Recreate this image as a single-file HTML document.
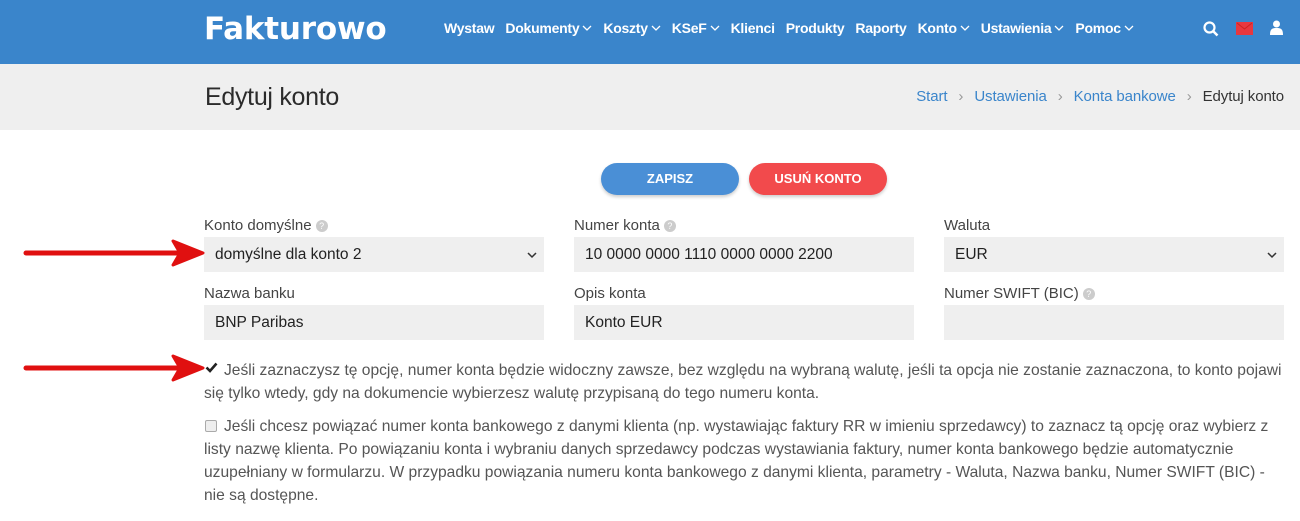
<!DOCTYPE html>
<html><head><meta charset="utf-8"><style>
*{box-sizing:border-box;margin:0;padding:0}
body{width:1300px;height:521px;overflow:hidden;background:#fff;font-family:"Liberation Sans",sans-serif;color:#333;position:relative}
.hdr{position:absolute;left:0;top:0;width:1300px;height:64px;background:#3a85cb}
.logo{position:absolute;left:204px;top:11px;color:#fff;font-size:31px;font-weight:bold;letter-spacing:-0.2px;font-family:"DejaVu Sans","Liberation Sans",sans-serif}
.nav{position:absolute;top:20px;left:444px;color:#fff;font-size:14px;font-weight:bold;white-space:nowrap;letter-spacing:-0.25px}
.nav span{margin-right:11px}
.nav svg{margin-left:3px;vertical-align:2px}
.band{position:absolute;left:0;top:64px;width:1300px;height:66px;background:#efefef}
h1{position:absolute;left:205px;top:83px;font-size:25px;font-weight:normal;color:#2b2b2b;letter-spacing:-0.3px}
.bc{position:absolute;right:16px;top:88px;font-size:15px;color:#3a85cb;letter-spacing:-0.1px}
.bc i{font-style:normal;color:#999;margin:0 11px}
.bc b{font-weight:normal;color:#333}
.btn{position:absolute;top:163px;height:32px;border-radius:16px;color:#fff;font-size:13px;font-weight:bold;text-align:center;line-height:32px;box-shadow:0 2px 3px rgba(0,0,0,.2)}
.lbl{position:absolute;font-size:15px;color:#444}
.q{display:inline-block;width:12px;height:12px;border-radius:50%;background:#ccc;color:#fff;font-size:9px;text-align:center;line-height:12px;vertical-align:1px;margin-left:4px}
.inp{position:absolute;width:340px;height:35px;background:#efefef;font-size:15.5px;color:#222;padding:9px 11px}
.chev{position:absolute;right:6px;top:8px}
.txt{position:absolute;left:224px;font-size:15.6px;color:#555;line-height:23px;width:1080px;white-space:nowrap}
.cb{position:absolute;width:12px;height:12px;border:1px solid #aaa;background:#eee;border-radius:2px}
</style></head><body>
<div class="hdr">
<div class="logo">Fakturowo</div>
<div class="nav"><span>Wystaw</span><span>Dokumenty<svg width="10" height="6"><path d="M1 1l4 4 4-4" stroke="#fff" stroke-width="1.3" fill="none"/></svg></span><span>Koszty<svg width="10" height="6"><path d="M1 1l4 4 4-4" stroke="#fff" stroke-width="1.3" fill="none"/></svg></span><span>KSeF<svg width="10" height="6"><path d="M1 1l4 4 4-4" stroke="#fff" stroke-width="1.3" fill="none"/></svg></span><span>Klienci</span><span>Produkty</span><span>Raporty</span><span>Konto<svg width="10" height="6"><path d="M1 1l4 4 4-4" stroke="#fff" stroke-width="1.3" fill="none"/></svg></span><span>Ustawienia<svg width="10" height="6"><path d="M1 1l4 4 4-4" stroke="#fff" stroke-width="1.3" fill="none"/></svg></span><span>Pomoc<svg width="10" height="6"><path d="M1 1l4 4 4-4" stroke="#fff" stroke-width="1.3" fill="none"/></svg></span></div>
<svg style="position:absolute;left:1203px;top:21px" width="16" height="16" viewBox="0 0 16 16"><circle cx="6.5" cy="6.5" r="5" fill="none" stroke="#fff" stroke-width="2.2"/><path d="M10 10l4.5 4.5" stroke="#fff" stroke-width="2.5"/></svg>
<svg style="position:absolute;left:1236px;top:22px" width="17" height="13"><rect width="17" height="13" fill="#e8373f"/><path d="M1 1l7.5 6 7.5-6" stroke="#c22" fill="none"/></svg>
<svg style="position:absolute;left:1270px;top:20px" width="13" height="15"><circle cx="6.5" cy="4" r="3.5" fill="#fff"/><path d="M0 15c0-6 2-7 6.5-7s6.5 1 6.5 7z" fill="#fff"/></svg>
</div>
<div class="band"></div>
<h1>Edytuj konto</h1>
<div class="bc">Start<i>›</i>Ustawienia<i>›</i>Konta bankowe<i>›</i><b>Edytuj konto</b></div>
<div class="btn" style="left:601px;width:138px;background:#4a8fd6">ZAPISZ</div>
<div class="btn" style="left:749px;width:138px;background:#f24a4c">USUŃ KONTO</div>

<div class="lbl" style="left:204px;top:217px">Konto domyślne<span class="q">?</span></div>
<div class="lbl" style="left:574px;top:217px">Numer konta<span class="q">?</span></div>
<div class="lbl" style="left:944px;top:217px">Waluta</div>
<div class="inp" style="left:204px;top:237px">domyślne dla konto 2<svg class="chev" width="12" height="20"><path d="M2 8l4 4 4-4" stroke="#333" stroke-width="1.5" fill="none"/></svg></div>
<div class="inp" style="left:574px;top:237px">10 0000 0000 1110 0000 0000 2200</div>
<div class="inp" style="left:944px;top:237px">EUR<svg class="chev" width="12" height="20"><path d="M2 8l4 4 4-4" stroke="#333" stroke-width="1.5" fill="none"/></svg></div>
<div class="lbl" style="left:204px;top:285px">Nazwa banku</div>
<div class="lbl" style="left:574px;top:285px">Opis konta</div>
<div class="lbl" style="left:944px;top:285px">Numer SWIFT (BIC)<span class="q">?</span></div>
<div class="inp" style="left:204px;top:305px">BNP Paribas</div>
<div class="inp" style="left:574px;top:305px">Konto EUR</div>
<div class="inp" style="left:944px;top:305px"></div>

<svg style="position:absolute;left:205px;top:362px" width="13" height="11"><path d="M1.5 5.5l3.5 3.5 6.5-7.5" stroke="#222" stroke-width="2.6" fill="none"/></svg>
<div class="txt" style="top:359px">Jeśli zaznaczysz tę opcję, numer konta będzie widoczny zawsze, bez względu na wybraną walutę, jeśli ta opcja nie zostanie zaznaczona, to konto pojawi<br><span style="margin-left:-20px">się tylko wtedy, gdy na dokumencie wybierzesz walutę przypisaną do tego numeru konta.</span></div>
<div class="cb" style="left:205px;top:420px"></div>
<div class="txt" style="top:415px">Jeśli chcesz powiązać numer konta bankowego z danymi klienta (np. wystawiając faktury RR w imieniu sprzedawcy) to zaznacz tą opcję oraz wybierz z<br><span style="margin-left:-20px">listy nazwę klienta. Po powiązaniu konta i wybraniu danych sprzedawcy podczas wystawiania faktury, numer konta bankowego będzie automatycznie</span><br><span style="margin-left:-20px">uzupełniany w formularzu. W przypadku powiązania numeru konta bankowego z danymi klienta, parametry - Waluta, Nazwa banku, Numer SWIFT (BIC) -</span><br><span style="margin-left:-20px">nie są dostępne.</span></div>

<svg style="position:absolute;left:20px;top:236px" width="185" height="34"><path d="M6 17H165" stroke="#e01010" stroke-width="5" stroke-linecap="round"/><path d="M153 5L183 17 153 29 160 17z" fill="#e01010" stroke="#e01010" stroke-width="3" stroke-linejoin="round"/></svg>
<svg style="position:absolute;left:20px;top:351px" width="185" height="34"><path d="M6 17H165" stroke="#e01010" stroke-width="5" stroke-linecap="round"/><path d="M153 5L183 17 153 29 160 17z" fill="#e01010" stroke="#e01010" stroke-width="3" stroke-linejoin="round"/></svg>
</body></html>
